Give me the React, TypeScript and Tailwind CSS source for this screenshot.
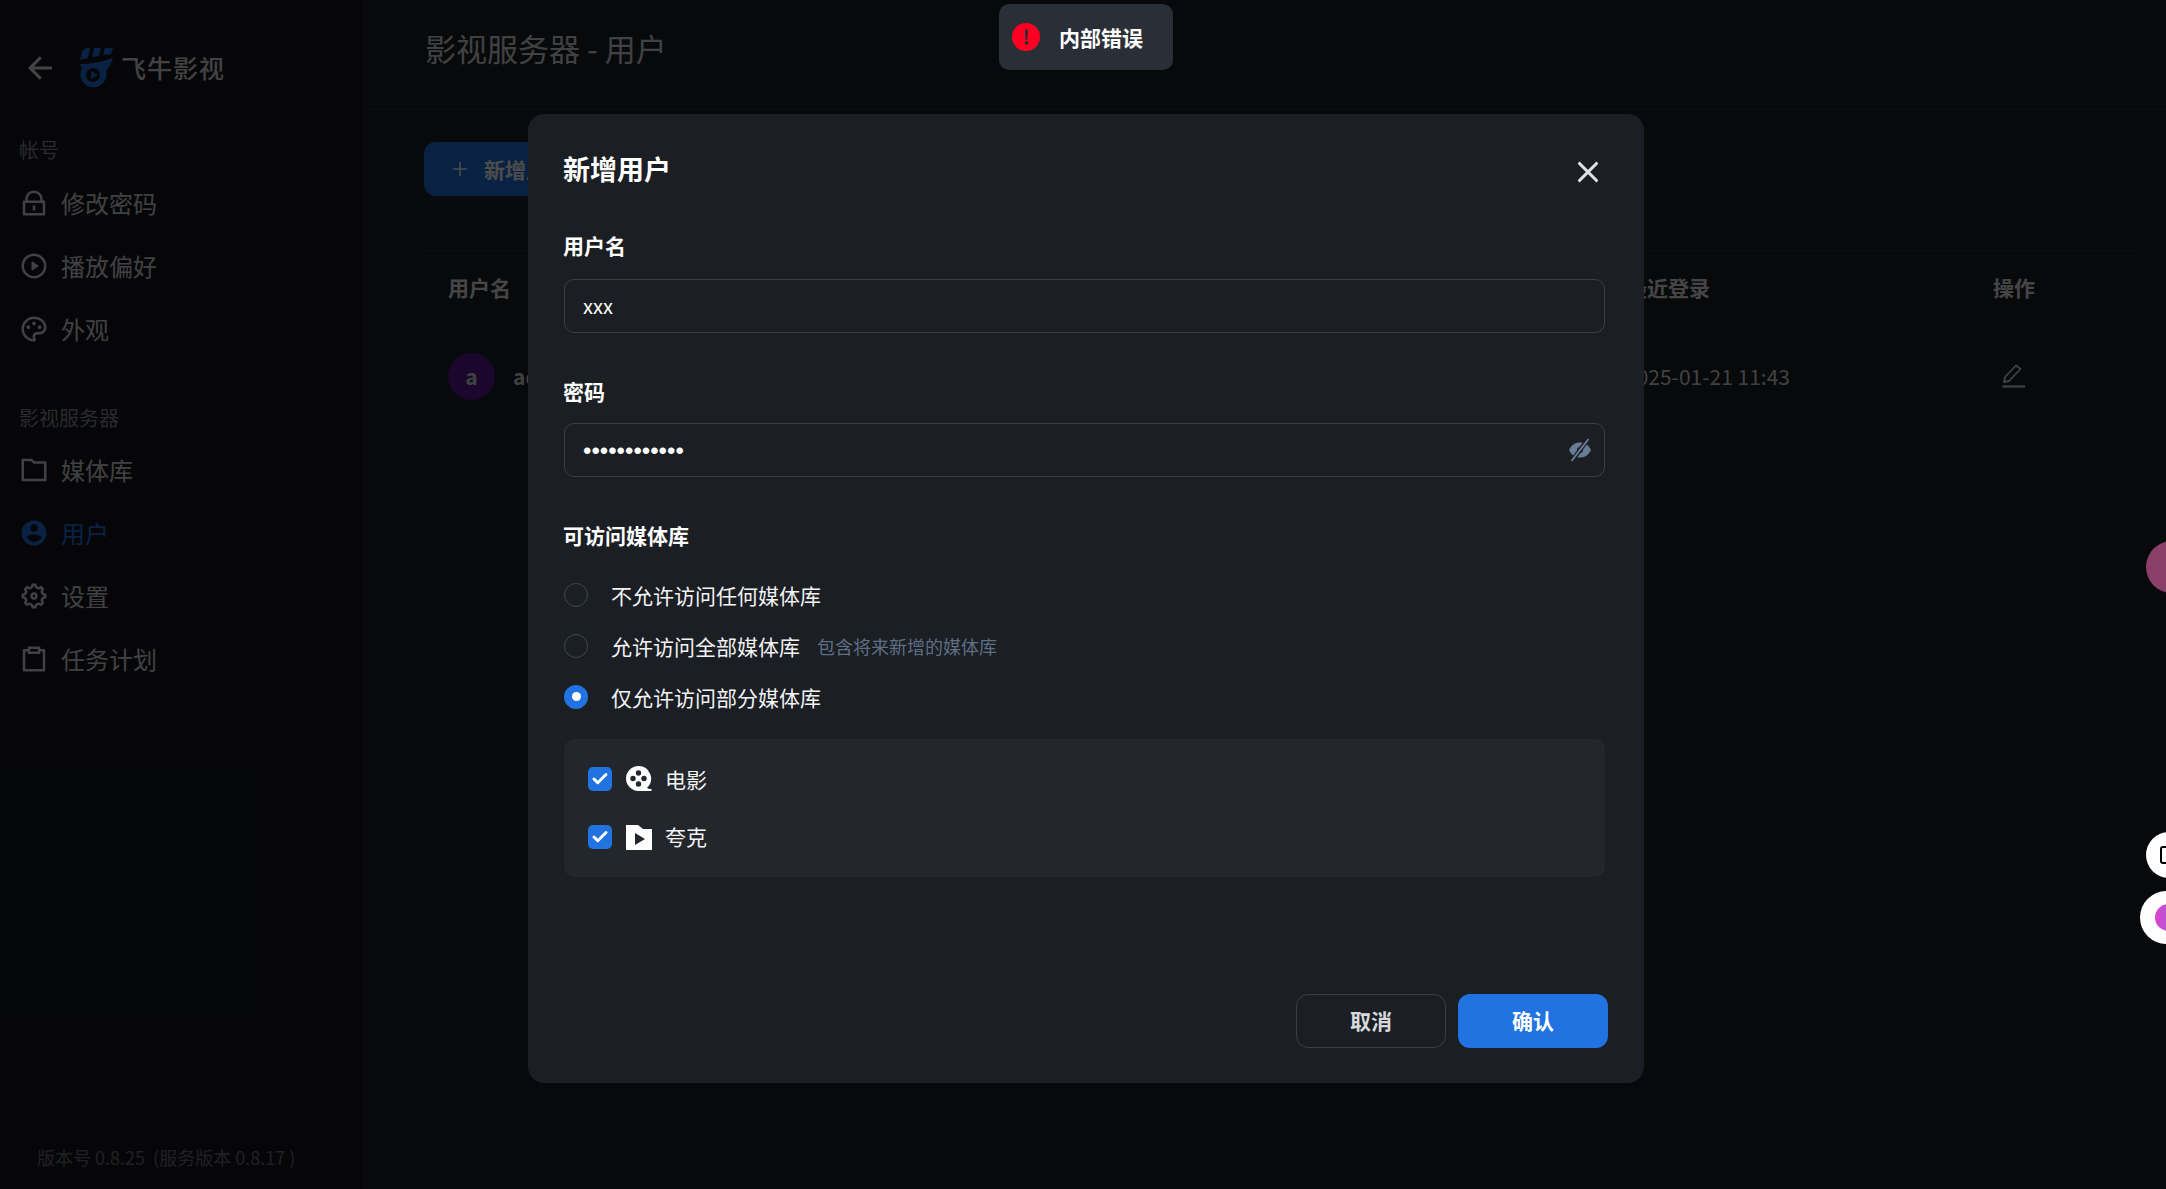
import { Check, Plus, X } from "lucide-react";
import {
  RiAccountCircleFill,
  RiArrowLeftLine,
  RiClipboardLine,
  RiFolderLine,
  RiLockLine,
  RiPaletteLine,
  RiPlayCircleLine,
  RiSettings5Line,
} from "react-icons/ri";

const font = { fontFamily: '"Noto Sans CJK SC", "Noto Sans", sans-serif' };

function Logo() {
  return (
    <svg width="35" height="42" viewBox="0 0 35 42">
      <path d="M1 13 L3 5 Q4 2 8 1 L11 1 L9 11 Z" fill="#2073e0" />
      <path d="M15 1 L22 1 L20 9 L13 10 Z" fill="#2073e0" />
      <path d="M26 1 L34 1 L32 7 L24 8 Z" fill="#2073e0" />
      <path
        fillRule="evenodd"
        fill="#2073e0"
        d="M1 17 Q17 17 34 11 L31 19 Q28 21 27 24 A13 13 0 1 1 3 21 Q1 19 1 17 Z M14 21 A7 7 0 1 0 14 35 A7 7 0 1 0 14 21 Z"
      />
      <path d="M12 24 L19 28 L12 32 Z" fill="#2073e0" />
    </svg>
  );
}

function NavItem({ icon, label, active }: { icon: React.ReactNode; label: string; active?: boolean }) {
  return (
    <div className={`flex h-[60px] w-[330px] items-center gap-[12px] rounded-xl pl-[19px] text-[24px] ${active ? "bg-[#14171c] text-[#2073e0]" : "text-[#d8dade]"}`}>
      {icon}
      <span>{label}</span>
    </div>
  );
}

function Sidebar() {
  return (
    <aside className="flex h-full w-[362px] shrink-0 flex-col bg-[#14161d]">
      <div className="flex h-[136px] items-center pl-[22px]">
        <RiArrowLeftLine size={36} className="text-[#e4e5e8]" />
        <div className="ml-[21px] mr-[7px]"><Logo /></div>
        <span className="text-[25px] font-medium tracking-[1px] text-[#dcdee2]">飞牛影视</span>
      </div>
      <div className="pl-[19px] text-[20px] leading-[28px] text-[#8a8d94]">帐号</div>
      <div className="mt-[9px] flex flex-col gap-[3px]">
        <NavItem icon={<RiLockLine size={30} />} label="修改密码" />
        <NavItem icon={<RiPlayCircleLine size={30} />} label="播放偏好" />
        <NavItem icon={<RiPaletteLine size={30} />} label="外观" />
      </div>
      <div className="mt-[45px] pl-[19px] text-[20px] leading-[28px] text-[#8a8d94]">影视服务器</div>
      <div className="mt-[8px] flex flex-col gap-[3px]">
        <NavItem icon={<RiFolderLine size={30} />} label="媒体库" />
        <NavItem icon={<RiAccountCircleFill size={30} />} label="用户" active />
        <NavItem icon={<RiSettings5Line size={30} />} label="设置" />
        <NavItem icon={<RiClipboardLine size={30} />} label="任务计划" />
      </div>
      <div className="mt-auto whitespace-pre pb-[19px] pl-[37px] text-[18px] leading-[26px] text-[#6d7077]">版本号 0.8.25  (服务版本 0.8.17 )</div>
    </aside>
  );
}

function EditIcon() {
  return (
    <svg width="26" height="26" viewBox="0 0 26 26" fill="none" stroke="currentColor" strokeWidth="1.8">
      <path d="M3 19 L4 14 L15 2.5 L19.5 6 L8 18 Z" strokeLinejoin="round" />
      <path d="M1.5 23.5 H24" strokeWidth="2.2" />
    </svg>
  );
}

function UsersPage() {
  return (
    <main className="flex min-w-0 flex-1 flex-col bg-[#1c1f24]">
      <header className="flex h-[110px] items-center border-b border-[#2b2e33] pb-[12px] pl-[63px] text-[31px] text-[#d8dade]">影视服务器 - 用户</header>
      <div className="flex flex-col pl-[62px] pr-[28px] pt-[32px]">
        <button className="flex h-[54px] w-[190px] items-center gap-[13px] rounded-xl bg-[#2073e0] pl-[25px] text-[21px] font-bold text-[#fff]">
          <Plus size={22} strokeWidth={1.7} />
          <span className="translate-y-[1px]">新增用户</span>
        </button>
        <div className="mt-[54px] flex h-[75px] items-center border-y border-[#2b2e33] text-[21px] font-bold text-[#e6e7ea]">
          <div className="w-[1202px] pl-[24px]">用户名</div>
          <div className="w-[367px]">最近登录</div>
          <div>操作</div>
        </div>
        <div className="flex h-[104px] items-center border-b border-[#2b2e33] text-[21px] text-[#d8dade]">
          <div className="flex w-[1202px] items-center gap-[18px] pl-[24px]">
            <div className="flex h-[47px] w-[47px] items-center justify-center rounded-full bg-[#5a1a9a] font-bold">a</div>
            <span className="font-bold">admin</span>
          </div>
          <div className="w-[375px] -translate-x-[1px]">2025-01-21 11:43</div>
          <span className="-translate-y-[1px]"><EditIcon /></span>
        </div>
      </div>
    </main>
  );
}

function Radio({ checked, label, hint }: { checked?: boolean; label: string; hint?: string }) {
  return (
    <div className="flex h-[51px] items-center">
      <span className={`flex h-[24px] w-[24px] -translate-y-[1px] items-center justify-center rounded-full ${checked ? "bg-[#2073e0]" : "border border-[#3d4654]"}`}>
        {checked && <span className="h-[9px] w-[9px] rounded-full bg-white" />}
      </span>
      <span className="ml-[23px] text-[21px] text-[#f2f3f5]">{label}</span>
      {hint && <span className="ml-[17px] text-[18px] text-[#5f6e85]">{hint}</span>}
    </div>
  );
}

function Library({ icon, label }: { icon: React.ReactNode; label: string }) {
  return (
    <div className="flex items-center">
      <span className="flex h-[24px] w-[24px] items-center justify-center rounded-[5px] bg-[#2073e0]">
        <Check size={18} strokeWidth={4} className="text-white" />
      </span>
      <span className="ml-[14px] flex h-[26px] w-[26px] items-center justify-center">{icon}</span>
      <span className="ml-[13px] text-[21px] text-[#f2f3f5]">{label}</span>
    </div>
  );
}

function FilmIcon() {
  return (
    <svg width="26" height="26" viewBox="0 0 26 26">
      <path
        fillRule="evenodd"
        fill="#fff"
        d="M12.5 0A12.5 12.5 0 0 1 21 21.7c1 .9 2 1.3 4.5 1.3v2H12.5A12.5 12.5 0 0 1 12.5 0ZM12.5 4.3a2.7 2.7 0 1 0 0 5.4a2.7 2.7 0 0 0 0-5.4ZM7 9.8a2.7 2.7 0 1 0 0 5.4a2.7 2.7 0 0 0 0-5.4ZM18 9.8a2.7 2.7 0 1 0 0 5.4a2.7 2.7 0 0 0 0-5.4ZM12.5 15.3a2.7 2.7 0 1 0 0 5.4a2.7 2.7 0 0 0 0-5.4Z"
      />
    </svg>
  );
}

function PlayFolderIcon() {
  return (
    <svg width="26" height="26" viewBox="0 0 26 26">
      <path fillRule="evenodd" fill="#fff" d="M0 1h12l5 4h9v21H0ZM9 9v12l10-6Z" />
    </svg>
  );
}

function EyeSlashIcon() {
  return (
    <svg width="24" height="24" viewBox="0 0 24 24" className="text-[#6a7b96]">
      <path fill="currentColor" d="M1 12 C4 6 8 4.5 12 4.5 C16 4.5 20 6 23 12 C20 18 16 19.5 12 19.5 C8 19.5 4 18 1 12 Z" />
      <circle cx="12" cy="12" r="3" fill="#1b1e23" />
      <path d="M4 23 L20 1" stroke="#1b1e23" strokeWidth="4.5" />
      <path d="M3.5 23 L20.5 1" stroke="currentColor" strokeWidth="2" />
    </svg>
  );
}

function Dialog() {
  return (
    <div className="absolute left-[528px] top-[114px] flex h-[969px] w-[1116px] flex-col rounded-[16px] bg-[#1b1e23] px-[36px] pb-[35px]">
      <div className="flex h-[111px] items-center justify-between pr-[3px]">
        <h2 className="-ml-[1px] -mt-[1px] text-[27px] font-bold text-white">新增用户</h2>
        <X size={34} strokeWidth={2.2} className="mt-[4px] text-[#dfe3e8]" />
      </div>
      <label className="-ml-[1px] text-[21px] font-bold leading-[40px] text-white">用户名</label>
      <div className="mt-[14px] flex h-[54px] w-[1041px] items-center rounded-[10px] border border-[#3a4048] pl-[18px] text-[20px] text-white">xxx</div>
      <label className="-ml-[1px] mt-[38px] text-[21px] font-bold leading-[40px] text-white">密码</label>
      <div className="mt-[12px] flex h-[54px] w-[1041px] items-center justify-between rounded-[10px] border border-[#3a4048] pl-[18px] pr-[12px] text-white">
        <span className="translate-y-[1px] font-['Liberation_Sans'] text-[24px]">••••••••••••</span>
        <EyeSlashIcon />
      </div>
      <label className="-ml-[1px] mt-[38px] text-[21px] font-bold leading-[40px] text-white">可访问媒体库</label>
      <div className="mt-[15px] flex flex-col">
        <Radio label="不允许访问任何媒体库" />
        <Radio label="允许访问全部媒体库" hint="包含将来新增的媒体库" />
        <Radio checked label="仅允许访问部分媒体库" />
      </div>
      <div className="mt-[16px] flex h-[138px] w-[1041px] flex-col justify-center gap-[26px] rounded-[10px] bg-[#23262b] pl-[24px]">
        <Library icon={<FilmIcon />} label="电影" />
        <Library icon={<PlayFolderIcon />} label="夸克" />
      </div>
      <div className="mt-auto flex justify-end gap-[12px]">
        <button className="h-[54px] w-[150px] rounded-[12px] border border-[#3a4048] text-[21px] font-bold text-[#d5d8dd]">取消</button>
        <button className="h-[54px] w-[150px] rounded-[12px] bg-[#2073e0] text-[21px] font-bold text-white">确认</button>
      </div>
    </div>
  );
}

export default function App() {
  return (
    <div className="relative h-[1189px] w-[2166px] overflow-hidden" style={font}>
      <div className="flex h-full">
        <Sidebar />
        <UsersPage />
      </div>
      <div className="absolute inset-0 bg-black/70" />
      <div className="absolute left-[2146px] top-[541px] h-[52px] w-[52px] rounded-full bg-[#8a3f68]" />
      <Dialog />
      <div className="absolute left-[999px] top-[4px] flex h-[66px] w-[174px] items-center rounded-[10px] bg-[#2a2f37] pl-[13px] text-[21px] font-bold text-white">
        <span className="flex h-[28px] w-[28px] items-center justify-center rounded-full bg-[#ff0022] text-[20px] font-bold leading-none text-[#2a2f37]">!</span>
        <span className="ml-[19px] translate-y-[1px]">内部错误</span>
      </div>
      <div className="absolute left-[2146px] top-[832px] flex h-[46px] w-[46px] items-center rounded-full bg-white pl-[14px]">
        <span className="h-[18px] w-[12px] rounded-[3px] border-2 border-black" />
      </div>
      <div className="absolute left-[2140px] top-[891px] flex h-[53px] w-[53px] items-center rounded-full bg-white pl-[15px]">
        <span className="h-[27px] w-[27px] rounded-full bg-gradient-to-r from-[#e040c8] to-[#7a5cf0]" />
      </div>
    </div>
  );
}
